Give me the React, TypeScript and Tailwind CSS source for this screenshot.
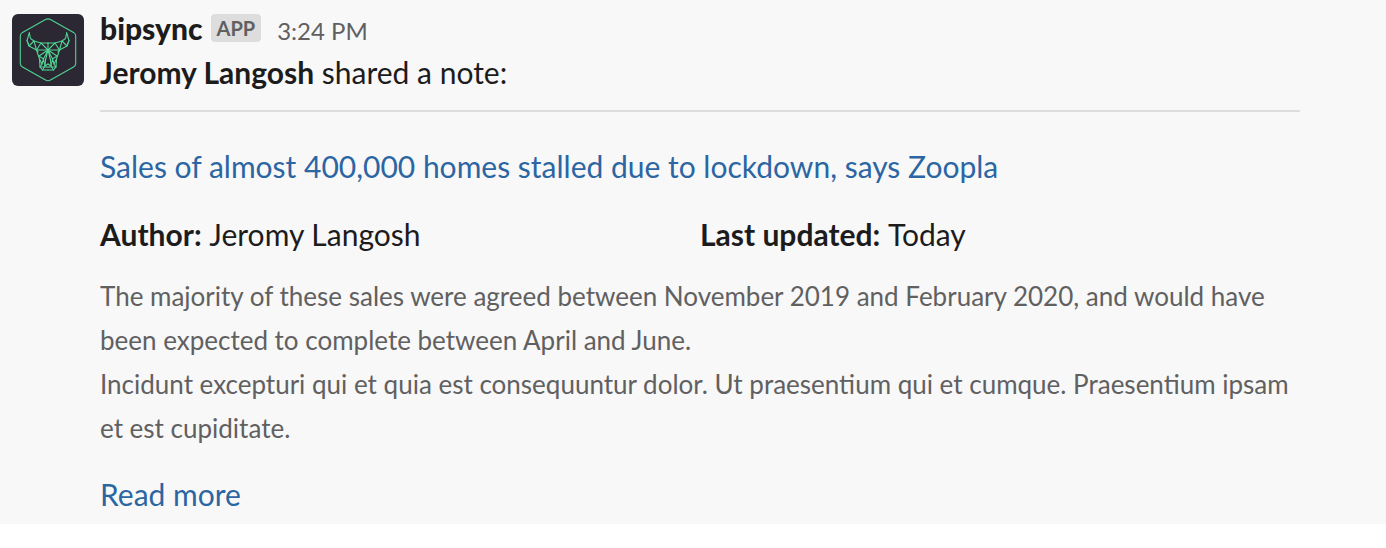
import type { ReactNode } from "react";

const note = {
  author: "Jeromy Langosh",
  title: "Sales of almost 400,000 homes stalled due to lockdown, says Zoopla",
  updated: "Today",
  paragraphs: [
    "The majority of these sales were agreed between November 2019 and February 2020, and would have been expected to complete between April and June.",
    "Incidunt excepturi qui et quia est consequuntur dolor. Ut praesentium qui et cumque. Praesentium ipsam et est cupiditate.",
  ],
};

// One half of the bull's head, mirrored for the other side
const halfBull = [
  "M17.3 18.8 L15 26.5 L17 32 L24.5 36 L26 38",
  "M17.3 18.8 L18.5 24.5 L22 27 L29 29 H36",
  "M15 26.5 L17 32 L22 27",
  "M22 27 L24.5 36 L29 29 L36 36 L24.5 36",
  "M24.5 36 L27.5 45 L28 53 L30.5 56 H36",
  "M36 36 L27 42 L31.5 45 L36 36",
  "M27.5 45 L30 50 L31.5 45 L33 52 L36 50",
  "M36 36 L33.5 46 L33 52 L30.5 56",
  "M30 50 L28 53 H36",
];

function BipsyncLogo() {
  return (
    <svg viewBox="0 0 72 72" className="h-[72px] w-[72px] shrink-0 rounded-md bg-[#2b2833]" role="img" aria-label="bipsync">
      <g fill="none" stroke="#50d392" strokeWidth="1.1" strokeLinejoin="round" strokeLinecap="round">
        <path d="M33.5 5.6 Q36 4.2 38.5 5.6 L61.5 18.4 Q63.7 19.7 63.7 22 V49.5 Q63.7 51.8 61.5 53 L38.5 66 Q36 67.4 33.5 66 L10.5 53 Q8.3 51.8 8.3 49.5 V22 Q8.3 19.7 10.5 18.4 Z" />
        {halfBull.map((d) => (
          <path key={d} d={d} />
        ))}
        <g transform="matrix(-1 0 0 1 72 0)">
          {halfBull.map((d) => (
            <path key={d} d={d} />
          ))}
        </g>
        <path d="M36 29 V36" />
      </g>
    </svg>
  );
}

function Field({ label, children }: { label: string; children: ReactNode }) {
  return (
    <div className="flex-1">
      <dt className="inline font-bold">{label}:</dt> <dd className="inline">{children}</dd>
    </div>
  );
}

export default function App() {
  return (
    <article className="flex gap-4 bg-[#f8f8f8] pt-[14px] pr-[86px] pb-2 pl-3 font-['Lato',sans-serif] text-[30px] leading-[44px] text-[#1d1c1d]">
      <BipsyncLogo />
      <div className="min-w-0 flex-1">
        <header className="flex h-9 items-baseline leading-[28px]">
          <span className="font-black">bipsync</span>
          <span className="ml-2 self-start rounded bg-[#dddddd] px-[6px] text-[20px] font-bold text-[#616061]">
            APP
          </span>
          <time className="ml-4 text-[24px] text-[#616061]">3:24 PM</time>
        </header>
        <p>
          <strong className="font-bold">{note.author}</strong> shared a note:
        </p>
        <hr className="mt-4 mb-8 border-t-2 border-[#dddddd]" />
        <h2>
          <a href="#note" className="text-[#2b66a3] hover:underline">
            {note.title}
          </a>
        </h2>
        <dl className="mt-6 flex">
          <Field label="Author">{note.author}</Field>
          <Field label="Last updated">{note.updated}</Field>
        </dl>
        <div className="mt-[18px] text-[26px] text-[#616061]">
          {note.paragraphs.map((text) => (
            <p key={text}>{text}</p>
          ))}
        </div>
        <a href="#more" className="mt-[22px] block w-fit text-[#2b66a3] hover:underline">
          Read more
        </a>
      </div>
    </article>
  );
}
